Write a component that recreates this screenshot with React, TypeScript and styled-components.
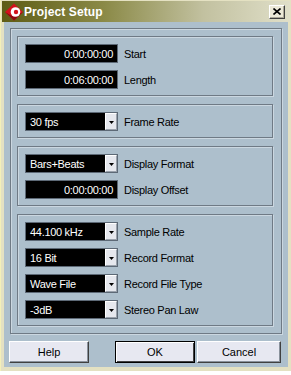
import styled, { createGlobalStyle, css } from "styled-components";

const GlobalStyle = createGlobalStyle`
  html, body {
    margin: 0;
    padding: 0;
    background: #fff;
  }
  body {
    font-family: "Liberation Sans", Arial, sans-serif;
  }
`;

type Row =
  | { kind: "field"; value: string; label: string }
  | { kind: "select"; value: string; label: string };

const groups: Row[][] = [
  [
    { kind: "field", value: "0:00:00:00", label: "Start" },
    { kind: "field", value: "0:06:00:00", label: "Length" },
  ],
  [{ kind: "select", value: "30 fps", label: "Frame Rate" }],
  [
    { kind: "select", value: "Bars+Beats", label: "Display Format" },
    { kind: "field", value: "0:00:00:00", label: "Display Offset" },
  ],
  [
    { kind: "select", value: "44.100 kHz", label: "Sample Rate" },
    { kind: "select", value: "16 Bit", label: "Record Format" },
    { kind: "select", value: "Wave File", label: "Record File Type" },
    { kind: "select", value: "-3dB", label: "Stereo Pan Law" },
  ],
];

function Logo() {
  return (
    <svg width="18" height="18" viewBox="0 0 18 18">
      <path d="M0 9 L9 0.5 L18 9 L9 17.5 Z" fill="#d4121c" />
      <path d="M0 9 L9 17.5 L18 9 L9 14 Z" fill="#8c0a10" />
      <circle cx="10.5" cy="9" r="4.8" fill="#fff" />
      <circle cx="11" cy="9" r="2.2" fill="#d4121c" />
    </svg>
  );
}

function App() {
  return (
    <>
      <GlobalStyle />
      <Window>
        <TitleBar>
          <Logo />
          <Title>Project Setup</Title>
          <CloseButton>
            <svg width="8" height="7" viewBox="0 0 8 7">
              <path d="M0.5 0.5 L7.5 6.5 M7.5 0.5 L0.5 6.5" stroke="#000" strokeWidth="1.6" />
            </svg>
          </CloseButton>
        </TitleBar>
        <Client>
          <Frame>
            {groups.map((rows, gi) => (
              <Group key={gi}>
                {rows.map((r, ri) => (
                  <FieldRow key={ri}>
                    {r.kind === "field" ? (
                      <Field $align="right">{r.value}</Field>
                    ) : (
                      <Field $align="left">
                        <span>{r.value}</span>
                        <DropButton>
                          <svg width="5" height="3" viewBox="0 0 5 3">
                            <path d="M0 0 H5 L2.5 3 Z" fill="#000" />
                          </svg>
                        </DropButton>
                      </Field>
                    )}
                    <Label>{r.label}</Label>
                  </FieldRow>
                ))}
              </Group>
            ))}
          </Frame>
          <ButtonRow>
            <Button $width={80} $gap={0}>Help</Button>
            <Button $width={80} $gap={26} $default>OK</Button>
            <Button $width={84} $gap={2}>Cancel</Button>
          </ButtonRow>
        </Client>
      </Window>
      <Desk />
    </>
  );
}

const Window = styled.div`
  box-sizing: border-box;
  width: 291px;
  height: 371px;
  display: flex;
  flex-direction: column;
  background: #e4e1c2;
  padding: 1px 0 4px 1px;
  border-left: 1px solid #f4f0b8;
`;

const TitleBar = styled.div`
  height: 21px;
  display: flex;
  align-items: center;
  padding: 0 4px 0 3px;
  margin-right: 1px;
  background: linear-gradient(to right, #5e5c15 0%, #8a8946 35%, #c2c1a0 70%, #e0dfc9 100%);
`;

const Title = styled.span`
  flex: 1;
  margin-left: 1px;
  color: #fff;
  font-weight: bold;
  font-size: 12px;
  letter-spacing: 0.1px;
`;

const CloseButton = styled.div`
  box-sizing: border-box;
  width: 16px;
  height: 14px;
  display: flex;
  align-items: center;
  justify-content: center;
  background: #ece9d8;
  border-top: 1px solid #fff;
  border-left: 1px solid #fff;
  border-right: 1px solid #404040;
  border-bottom: 1px solid #404040;
  box-shadow: inset -1px -1px 0 #aca899;
  margin-right: 1px;
`;

const Client = styled.div`
  flex: 1;
  margin-right: 3px;
  margin-left: 2px;
  background: #adbfcc;
  padding: 6px 0 0 5px;
`;

const etched = css`
  border: 1px solid #6f7a85;
  box-shadow: 1px 1px 0 #cbd7e0, inset 1px 1px 0 #cbd7e0;
`;

const Frame = styled.div`
  ${etched};
  box-sizing: border-box;
  width: 272px;
  margin-left: 1px;
  padding: 7px 8px 7px 6px;
  display: flex;
  flex-direction: column;
  gap: 8px;
`;

const Group = styled.div`
  ${etched};
  padding: 7px 6px 6px 7px;
  display: flex;
  flex-direction: column;
  gap: 7px;
`;

const FieldRow = styled.div`
  display: flex;
  align-items: center;
  height: 19px;
`;

const Field = styled.div<{ $align: "left" | "right" }>`
  box-sizing: border-box;
  width: 93px;
  height: 19px;
  background: #000;
  border: 1px solid #5d6976;
  color: #fff;
  font-size: 11px;
  letter-spacing: -0.3px;
  display: flex;
  align-items: center;
  justify-content: ${(p) => (p.$align === "right" ? "flex-end" : "space-between")};
  padding: ${(p) => (p.$align === "right" ? "0 4px 0 0" : "0 0 0 4px")};
`;

const DropButton = styled.div`
  box-sizing: border-box;
  width: 12px;
  height: 17px;
  display: flex;
  align-items: center;
  justify-content: center;
  padding-top: 1px;
  background: #e6e8ee;
  border-left: 1px solid #fff;
  border-top: 1px solid #fff;
  border-right: 1px solid #9aa2ac;
  border-bottom: 1px solid #9aa2ac;
`;

const Label = styled.span`
  margin-left: 6px;
  font-size: 11px;
  letter-spacing: -0.3px;
  color: #000;
`;

const ButtonRow = styled.div`
  display: flex;
  margin-top: 7px;
`;

const Button = styled.div<{ $default?: boolean; $width: number; $gap: number }>`
  box-sizing: border-box;
  width: ${(p) => p.$width}px;
  margin-left: ${(p) => p.$gap}px;
  height: 22px;
  display: flex;
  align-items: center;
  justify-content: center;
  background: #e7e8f1;
  font-size: 11px;
  color: #000;
  border-top: 1px solid #fff;
  border-left: 1px solid #fff;
  border-right: 1px solid #404040;
  border-bottom: 1px solid #404040;
  box-shadow: inset -1px -1px 0 #8a929c;
  ${(p) =>
    p.$default &&
    css`
      border: 1px solid #000;
      box-shadow: inset 1px 1px 0 #fff, inset -1px -1px 0 #404040;
    `}
`;

const Desk = styled.div`
  height: 4px;
  background: #fff;
`;

export default App;
